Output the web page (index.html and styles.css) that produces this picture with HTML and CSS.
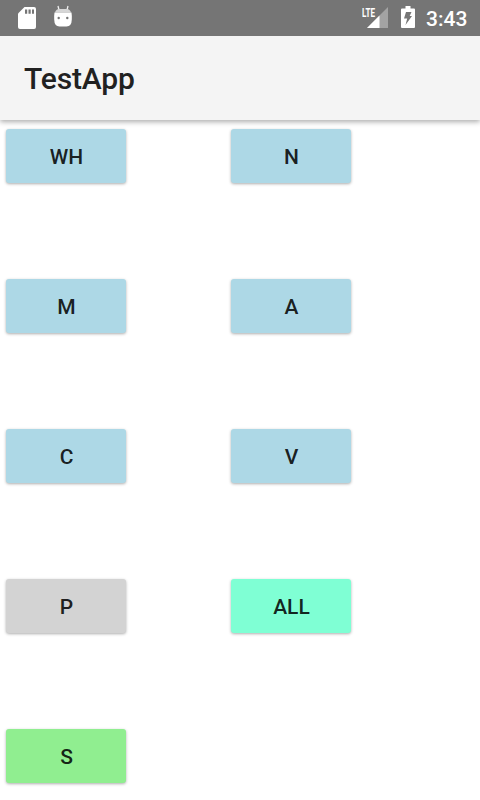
FILE: index.html
```html
<!DOCTYPE html>
<html lang="en">
<head>
<meta charset="utf-8">
<title>TestApp</title>
<link rel="stylesheet" href="styles.css">
</head>
<body>
<div class="status">
  <svg class="sd" width="18" height="36" viewBox="0 0 18 36"><path fill="#fff" d="M6.500 7H16a2 2 0 0 1 2 2v18a2 2 0 0 1-2 2H2a2 2 0 0 1-2-2V13.500z"/><path fill="#757575" d="M7 9.500h2.200v4.300H7zM10.500 9.500h2.200v4.300h-2.200zM14 9.500h2v4.300h-2z"/></svg>
  <svg class="droid" width="18" height="36" viewBox="0 0 18 36"><path stroke="#eee" stroke-width="1.300" d="M4 6l1 4M14 6l-1 4"/><path fill="#d6d6d6" d="M1 12.500Q2 9 5 9h8q3 0 4 3.500z"/><path fill="#fff" d="M.5 12.500h17q.5 3 .3 7-.2 7-5.300 7h-7q-5.100 0-5.300-7-.2-4 .3-7z"/><circle cx="4.700" cy="18" r="1.200" fill="#757575"/><circle cx="13.300" cy="18" r="1.200" fill="#757575"/></svg>
  <svg class="signal" width="27" height="36" viewBox="0 0 27 36"><path fill="#a3a3a3" d="M26 7v21H5z"/><path fill="#fff" d="M17.500 15.500V28H5z"/><path fill="#757575" d="M0 6h15v12H0z"/><text class="lte" x="0" y="17" textLength="13" lengthAdjust="spacingAndGlyphs">LTE</text></svg>
  <svg class="battery" width="14" height="36" viewBox="0 0 14 36"><path fill="#fff" d="M4.500 6h5v2.500H13q1 0 1 1V27q0 1-1 1H1q-1 0-1-1V9.500q0-1 1-1h3.500z"/><path fill="#757575" d="M5 12h5.500l-1.800 4H11l-6.500 9 1.700-6.500H3z"/></svg>
  <span class="clock">3:43</span>
</div>
<header class="bar"><h1>TestApp</h1></header>
<main class="grid">
  <button>WH</button><button>N</button>
  <button>M</button><button>A</button>
  <button>C</button><button>V</button>
  <button class="gray">P</button><button class="aqua">ALL</button>
  <button class="green">S</button>
</main>
</body>
</html>
```
FILE: styles.css
```css
body { margin: 0; min-height: 800px; background: #fff; font-family: Roboto, sans-serif; color: #212121; }
.status { display: flex; align-items: center; height: 36px; background: #757575; }
.sd { margin-left: 18px; }
.droid { margin-left: 18px; }
.signal { margin-left: auto; }
.lte { fill: #fff; font: 700 13.500px Roboto, sans-serif; }
.battery { margin-left: 12px; }
.clock { color: #fff; font-size: 21px; font-weight: 500; line-height: 24px; width: 42px; margin: 2px 12px 0 11px; white-space: nowrap; }
.bar { height: 84px; background: #f4f4f4; display: flex; align-items: center; padding-left: 24px; box-shadow: 0 2px 5px rgba(0,0,0,.32); clip-path: inset(0 0 -10px 0); }
h1 { margin: 0; font-size: 30px; font-weight: 500; letter-spacing: -.15px; }
.grid { display: grid; grid-template-columns: 225px 225px; grid-auto-rows: 54px; row-gap: 96px; padding: 9px 6px 17px; }
button { width: 120px; height: 54px; padding: 2px 0 0 1px; border: 0; border-radius: 3px; background: #add8e6; color: rgba(0,0,0,.87); font: 500 21px Roboto, sans-serif; box-shadow: 0 1px 3px rgba(0,0,0,.32); }
.gray { background: #d3d3d3; }
.aqua { background: #7fffd4; }
.green { background: #90ee90; }
```
